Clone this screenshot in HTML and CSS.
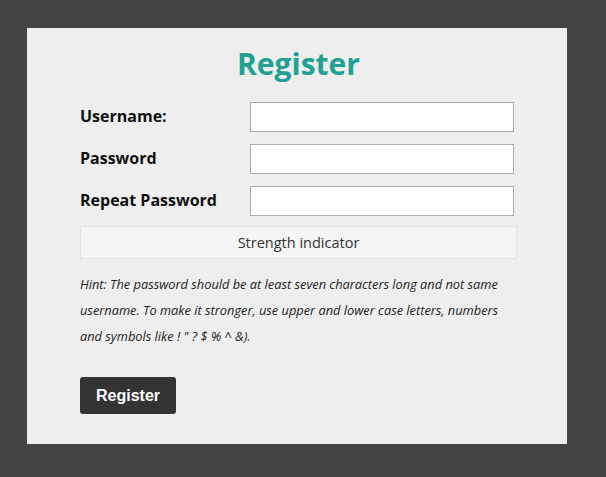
FILE: index.html
```html
<html>

<head>
	<link rel="stylesheet" href="styles.css">
</head>

<body>
	<div class="panel">
		<h1>Register</h1>
		<form>
			<div class="fields">
				<label for="username">Username:</label>
				<input type="text" class="input" id="username" value="" />

				<label for="password">Password</label>
				<input type="password" class="input" id="password" value="" />

				<label for="repeat">Repeat Password</label>
				<input type="password" class="input" id="repeat" value="" />
			</div>

			<div class="strength">Strength indicator</div>

			<p class="hint">Hint: The password should be at least seven characters long and not same username. To make it stronger, use upper and lower case letters, numbers and symbols like ! " ? $ % ^ &amp;).</p>

			<button type="button">Register</button>
		</form>
	</div>
</body>

</html>
```

FILE: styles.css
```css
body {
	margin: 0;
	padding: 28px 27px;
	background-color: #444444;
	font-family: "Open Sans", sans-serif;
	overflow: hidden;
}

.panel {
	width: 540px;
	height: 416px;
	box-sizing: border-box;
	padding: 16px 50px 0 53px;
	background-color: #eeeeee;
}

h1 {
	margin: 0;
	text-align: center;
	font-size: 30px;
	line-height: 40px;
	font-weight: bold;
	color: #22a193;
}

form {
	display: flex;
	flex-direction: column;
	margin-top: 18px;
}

.fields {
	display: grid;
	grid-template-columns: 170px 264px;
	grid-auto-rows: 30px;
	row-gap: 12px;
	align-items: center;
}

label {
	font-size: 16px;
	line-height: 28px;
	align-self: start;
	font-weight: bold;
	color: #111111;
}

.input {
	height: 30px;
	box-sizing: border-box;
	border: 1px solid #aaaaaa;
	background-color: white;
	padding: 4px;
}

.strength {
	margin-top: 10px;
	height: 33px;
	box-sizing: border-box;
	border: 1px solid #e2e2e2;
	background-color: #f5f5f5;
	text-align: center;
	font-size: 14.5px;
	line-height: 31px;
	color: #333333;
}

.hint {
	margin: 12px 0 0 0;
	font-size: 12.8px;
	font-style: italic;
	line-height: 26px;
	color: #222222;
	padding-right: 8px;
}

button {
	align-self: flex-start;
	margin-top: 28px;
	width: 96px;
	height: 37px;
	padding: 0;
	border: none;
	border-radius: 3px;
	background-color: #333333;
	color: white;
	font-family: "Liberation Sans", Arial, sans-serif;
	font-size: 16px;
	font-weight: bold;
	cursor: pointer;
}
```
